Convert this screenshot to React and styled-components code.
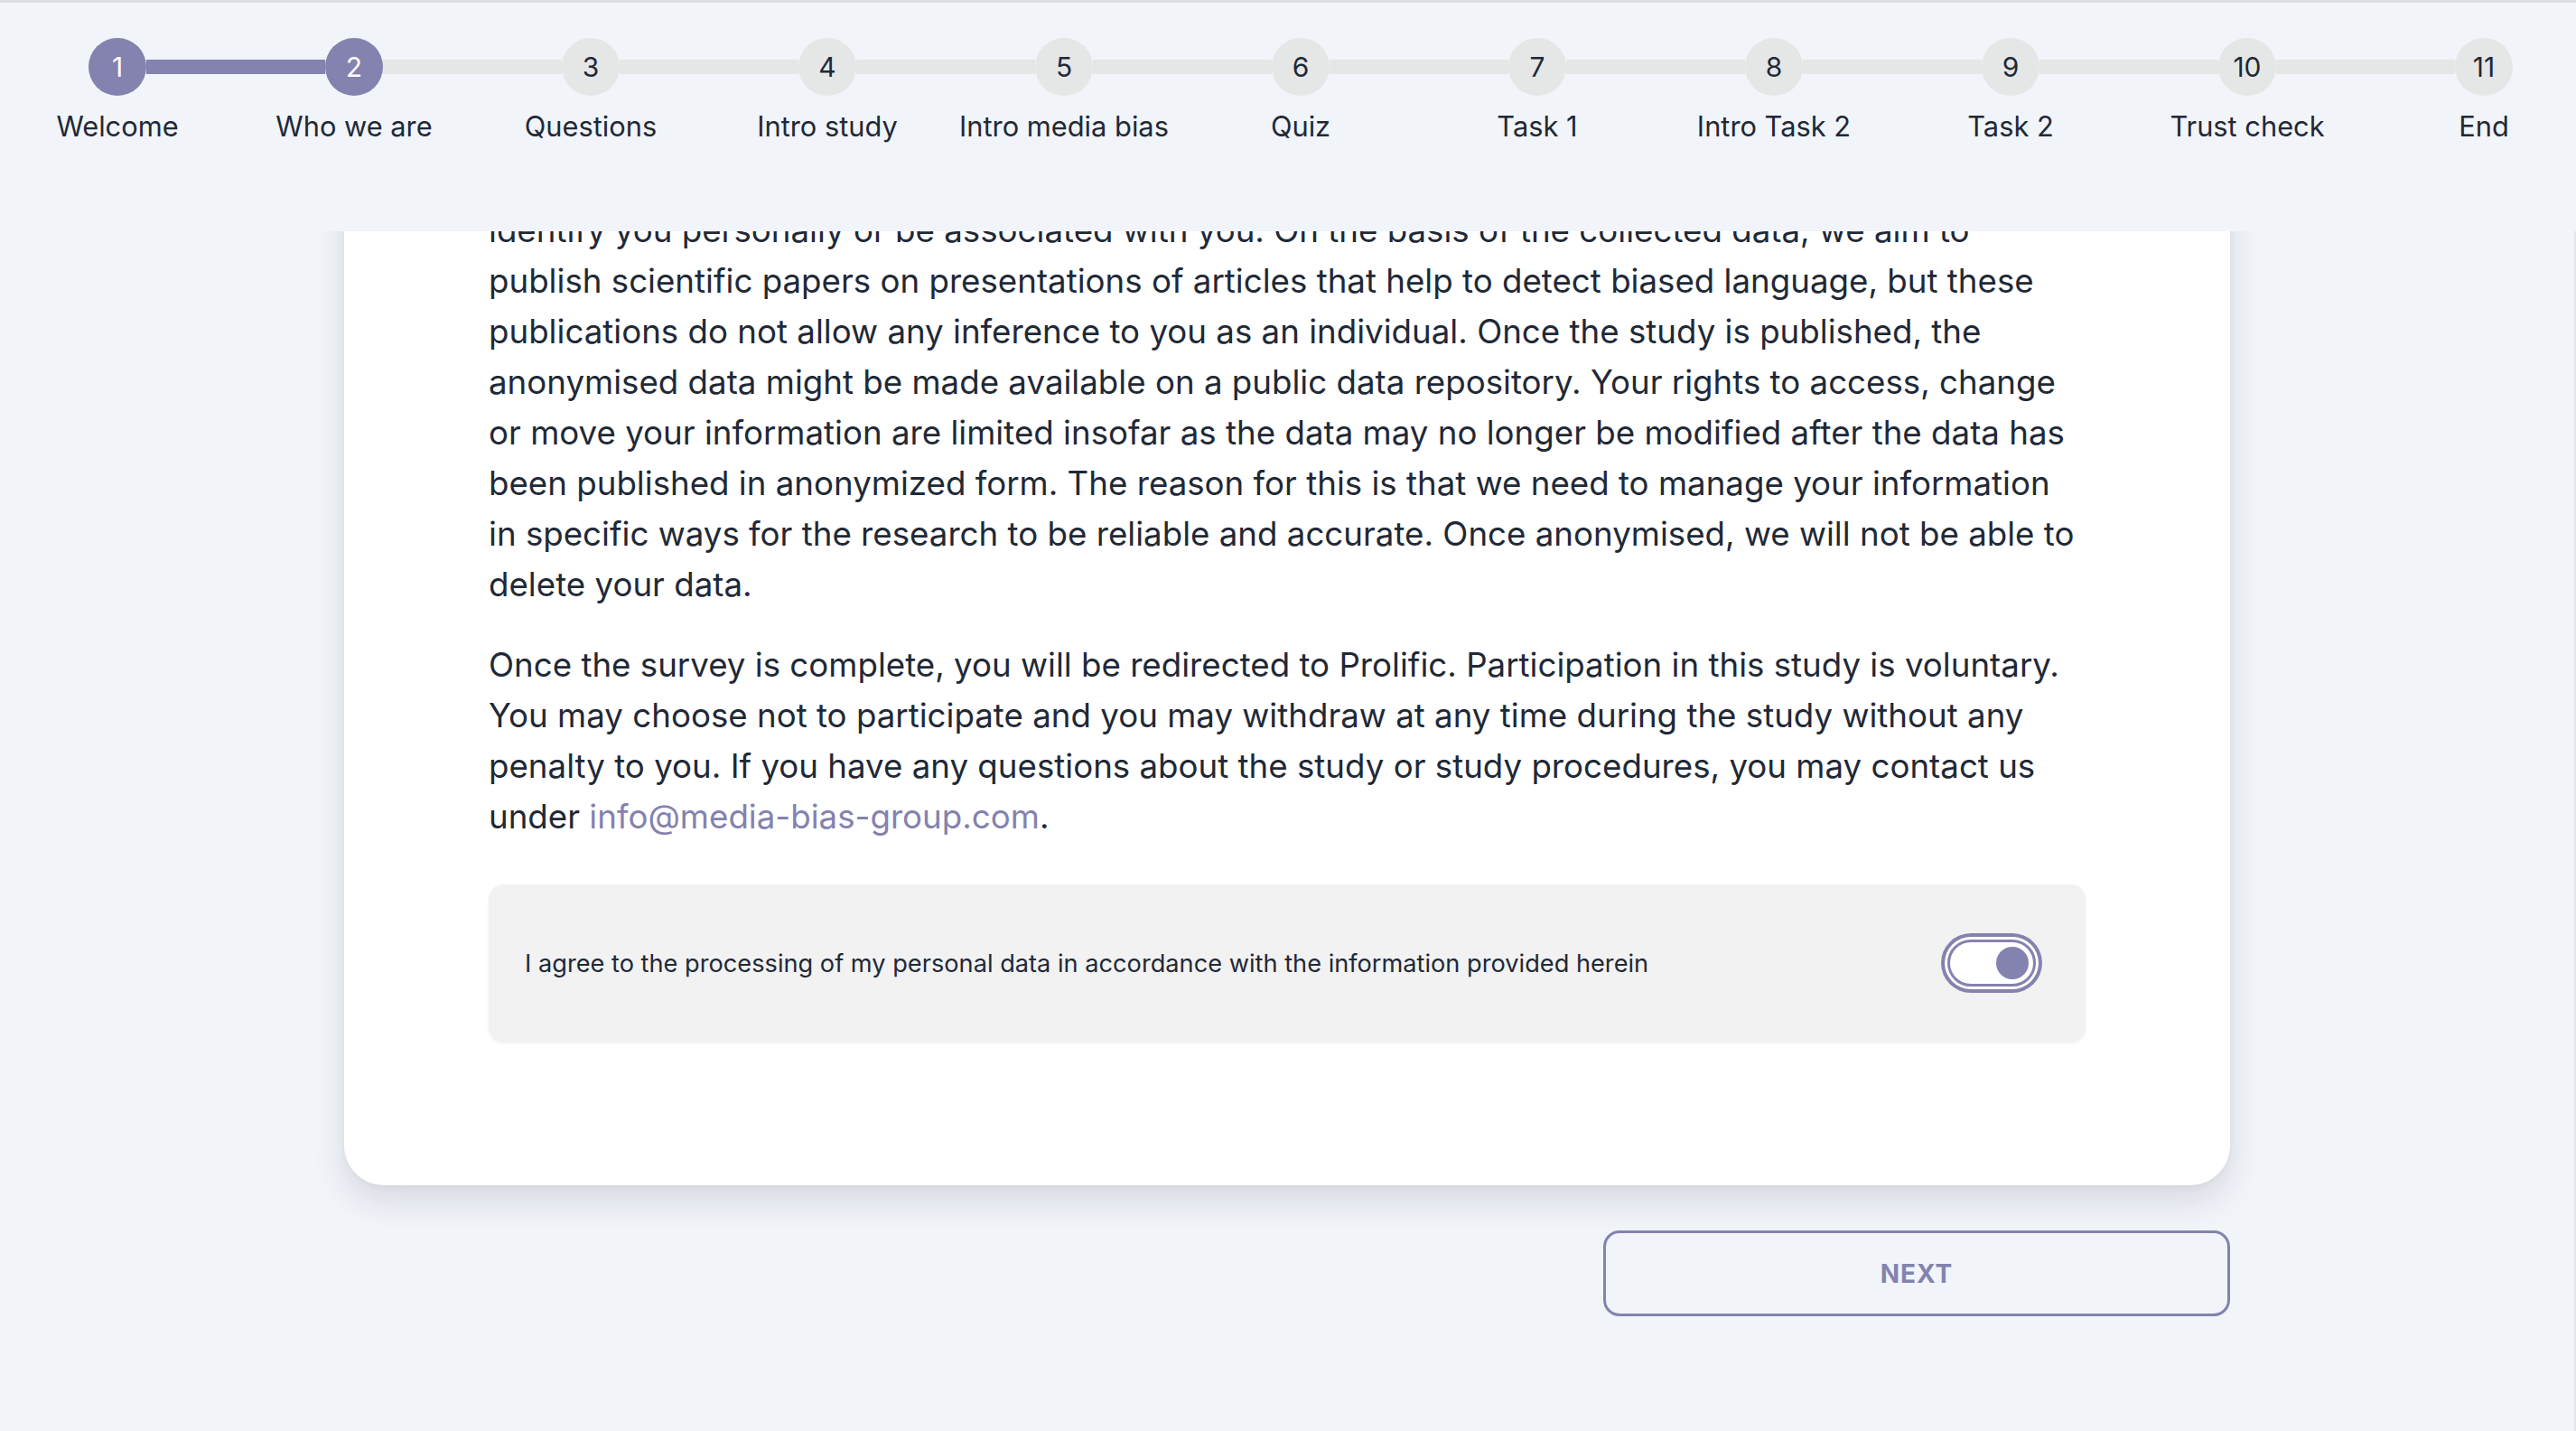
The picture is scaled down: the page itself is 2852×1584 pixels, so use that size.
import React from 'react'
import styled, { createGlobalStyle } from 'styled-components'

const purple = '#8482ae'
const ink = '#1f2937'

const steps = [
  'Welcome', 'Who we are', 'Questions', 'Intro study', 'Intro media bias',
  'Quiz', 'Task 1', 'Intro Task 2', 'Task 2', 'Trust check', 'End',
]
const current = 1

// lines as they wrap in the original layout
const privacyLines = [
  'identify you personally or be associated with you. On the basis of the collected data, we aim to',
  'publish scientific papers on presentations of articles that help to detect biased language, but these',
  'publications do not allow any inference to you as an individual. Once the study is published, the',
  'anonymised data might be made available on a public data repository. Your rights to access, change',
  'or move your information are limited insofar as the data may no longer be modified after the data has',
  'been published in anonymized form. The reason for this is that we need to manage your information',
  'in specific ways for the research to be reliable and accurate. Once anonymised, we will not be able to',
  'delete your data.',
]

const surveyLines = [
  'Once the survey is complete, you will be redirected to Prolific. Participation in this study is voluntary.',
  'You may choose not to participate and you may withdraw at any time during the study without any',
  'penalty to you. If you have any questions about the study or study procedures, you may contact us',
]

const Global = createGlobalStyle`
  html, body {
    margin: 0;
    padding: 0;
    overflow: hidden;
    background: #f1f4f9;
  }
  * { box-sizing: border-box; }
`

const Page = styled.div`
  height: 1584px;
  display: flex;
  flex-direction: column;
  font-family: Inter, "Liberation Sans", sans-serif;
  color: ${ink};
  border-top: 3px solid #dcdde0;
`

const Header = styled.header`
  height: 253px;
  flex-shrink: 0;
  background: #f1f4f9;
  position: relative;
  z-index: 2;
`

const Steps = styled.ol`
  list-style: none;
  margin: 0;
  padding: 39px 0 0;
  display: grid;
  grid-template-columns: repeat(11, 262px);
  margin-left: -1px;
`

const Step = styled.li`
  display: flex;
  flex-direction: column;
  align-items: center;
`

const Track = styled.div`
  display: flex;
  align-items: center;
  width: 100%;
  height: 64px;
`

const Line = styled.div`
  flex: 1;
  height: 16px;
  background: ${p => (p.$hidden ? 'transparent' : p.$done ? purple : '#e5e6e6')};
`

const Dot = styled.div`
  width: 64px;
  height: 64px;
  border-radius: 50%;
  flex-shrink: 0;
  display: flex;
  align-items: center;
  justify-content: center;
  font-size: 30px;
  background: ${p => (p.$done ? purple : '#e5e6e6')};
  color: ${p => (p.$done ? '#fff' : ink)};
`

const Label = styled.span`
  margin-top: 14px;
  font-size: 30.8px;
  line-height: 40px;
  white-space: nowrap;
`

const Viewport = styled.main`
  flex: 1;
  overflow: hidden;
  border-right: 2px solid #e3e4e6;
  display: flex;
  flex-direction: column;
  align-items: center;
`

const Column = styled.div`
  width: 2088px;
  display: flex;
  flex-direction: column;
  align-items: flex-end;
`

const Card = styled.section`
  width: 100%;
  background: #fff;
  border-radius: 44px;
  box-shadow: 0 18px 36px rgba(30, 40, 60, 0.12), 0 2px 6px rgba(30, 40, 60, 0.05);
  padding: 80px 160px 159px;
  margin-top: -109px;
`

const Para = styled.p`
  margin: 0 0 33px;
  font-size: 36.7px;
  line-height: 56px;
  white-space: nowrap;
`

const Link = styled.a`
  color: ${purple};
  text-decoration: none;
`

const Consent = styled.div`
  margin-top: 47px;
  height: 174px;
  background: #f2f2f2;
  border-radius: 16px;
  box-shadow: 0 2px 3px rgba(0, 0, 0, 0.06);
  display: flex;
  align-items: center;
  justify-content: space-between;
  padding: 0 55px 0 40px;
  font-size: 27.2px;
`

const Toggle = styled.div`
  width: 98px;
  height: 52px;
  border-radius: 26px;
  border: 3px solid ${purple};
  background: #fff;
  box-shadow: 0 0 0 3px #fff, 0 0 0 7px ${purple};
  display: flex;
  align-items: center;
  justify-content: flex-end;
  padding: 0 5px;
`

const Knob = styled.span`
  width: 36px;
  height: 36px;
  border-radius: 50%;
  background: ${purple};
`

const NextButton = styled.button`
  margin-top: 50px;
  width: 694px;
  height: 95px;
  border: 3px solid ${purple};
  border-radius: 18px;
  background: transparent;
  color: ${purple};
  font-family: Inter, "Liberation Sans", sans-serif;
  font-weight: 700;
  font-size: 28px;
  letter-spacing: 1px;
  text-transform: uppercase;
`

const withBreaks = lines =>
  lines.map((line, i) => (
    <React.Fragment key={i}>
      {line}
      <br />
    </React.Fragment>
  ))

export default function App() {
  return (
    <Page>
      <Global />
      <Header>
        <Steps>
          {steps.map((label, i) => (
            <Step key={label}>
              <Track>
                <Line $hidden={i === 0} $done={i <= current} />
                <Dot $done={i <= current}>{i + 1}</Dot>
                <Line $hidden={i === steps.length - 1} $done={i < current} />
              </Track>
              <Label>{label}</Label>
            </Step>
          ))}
        </Steps>
      </Header>
      <Viewport>
        <Column>
          <Card>
            <Para>{withBreaks(privacyLines)}</Para>
            <Para>
              {withBreaks(surveyLines)}
              under <Link href="#">info@media-bias-group.com</Link>.
            </Para>
            <Consent>
              <span>I agree to the processing of my personal data in accordance with the information provided herein</span>
              <Toggle>
                <Knob />
              </Toggle>
            </Consent>
          </Card>
          <NextButton>Next</NextButton>
        </Column>
      </Viewport>
    </Page>
  )
}
